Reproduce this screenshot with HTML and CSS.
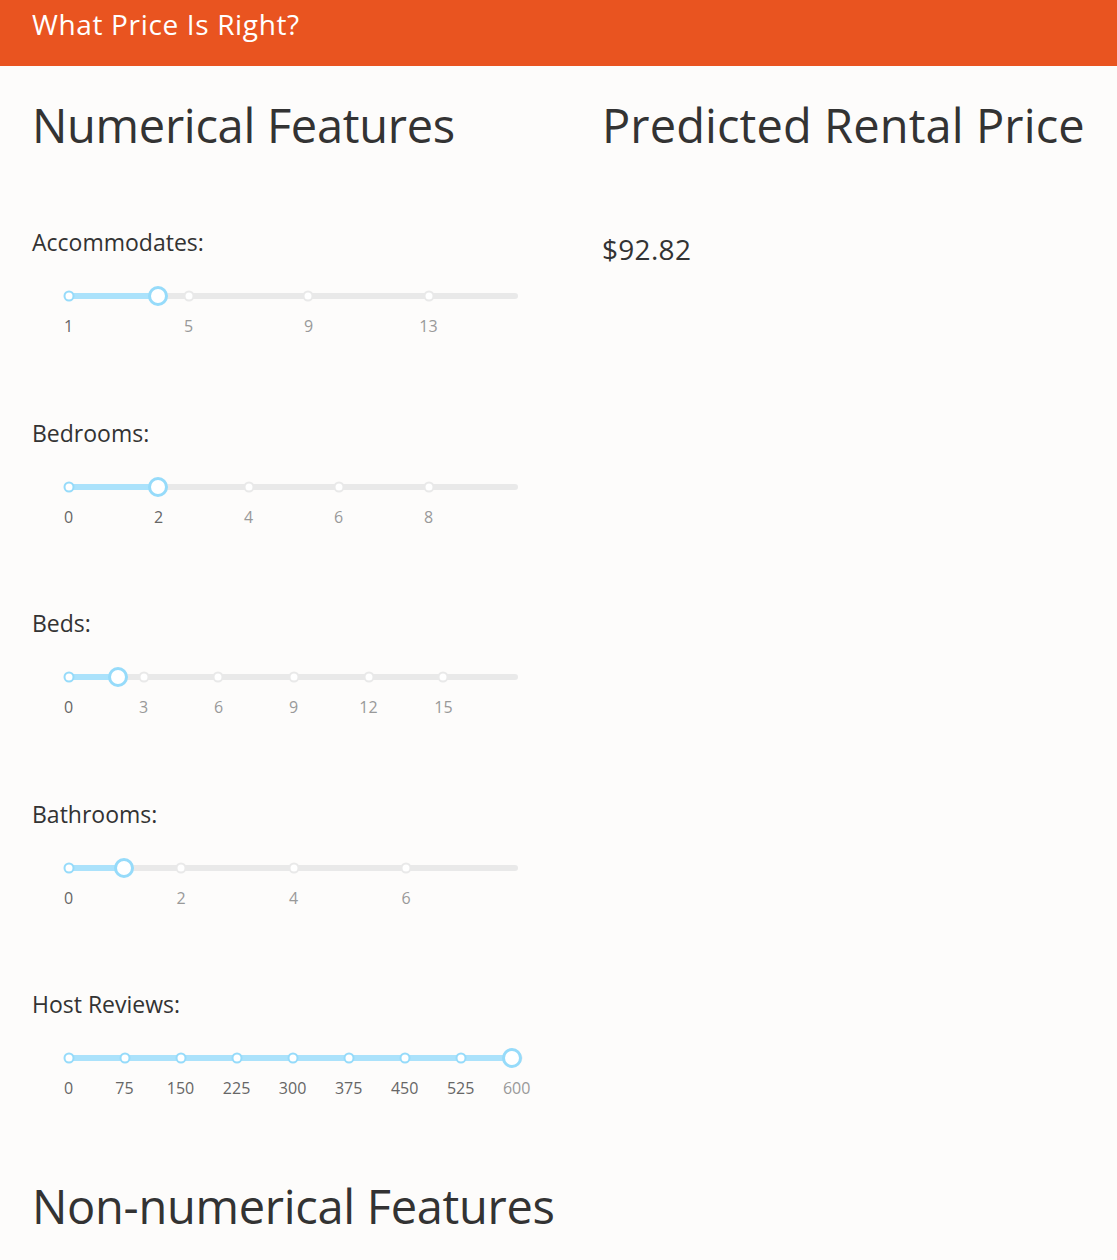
FILE: index.html
```html
<!DOCTYPE html>
<html lang="en">
<head>
<meta charset="utf-8">
<title>What Price Is Right?</title>
<link rel="stylesheet" href="styles.css">
</head>
<body>
<header class="navbar">
  <span class="brand">What Price Is Right?</span>
</header>
<main class="content">
  <section class="col col-left">
    <h1 class="heading">Numerical Features</h1>

    <div class="fields">
    <div class="field">
      <p class="field-label">Accommodates:</p>
      <div class="slider">
        <div class="rail"></div>
        <div class="track" style="width:20%"></div>
        <span class="dot active" style="left:0%"></span>
        <span class="dot" style="left:26.667%"></span>
        <span class="dot" style="left:53.333%"></span>
        <span class="dot" style="left:80%"></span>
        <span class="handle" style="left:20%"></span>
        <div class="marks">
          <span class="mark active" style="left:0%">1</span>
          <span class="mark" style="left:26.667%">5</span>
          <span class="mark" style="left:53.333%">9</span>
          <span class="mark" style="left:80%">13</span>
        </div>
      </div>
    </div>

    <div class="field">
      <p class="field-label">Bedrooms:</p>
      <div class="slider">
        <div class="rail"></div>
        <div class="track" style="width:20%"></div>
        <span class="dot active" style="left:0%"></span>
        <span class="dot active" style="left:20%"></span>
        <span class="dot" style="left:40%"></span>
        <span class="dot" style="left:60%"></span>
        <span class="dot" style="left:80%"></span>
        <span class="handle" style="left:20%"></span>
        <div class="marks">
          <span class="mark active" style="left:0%">0</span>
          <span class="mark active" style="left:20%">2</span>
          <span class="mark" style="left:40%">4</span>
          <span class="mark" style="left:60%">6</span>
          <span class="mark" style="left:80%">8</span>
        </div>
      </div>
    </div>

    <div class="field">
      <p class="field-label">Beds:</p>
      <div class="slider">
        <div class="rail"></div>
        <div class="track" style="width:11.111%"></div>
        <span class="dot active" style="left:0%"></span>
        <span class="dot" style="left:16.667%"></span>
        <span class="dot" style="left:33.333%"></span>
        <span class="dot" style="left:50%"></span>
        <span class="dot" style="left:66.667%"></span>
        <span class="dot" style="left:83.333%"></span>
        <span class="handle" style="left:11.111%"></span>
        <div class="marks">
          <span class="mark active" style="left:0%">0</span>
          <span class="mark" style="left:16.667%">3</span>
          <span class="mark" style="left:33.333%">6</span>
          <span class="mark" style="left:50%">9</span>
          <span class="mark" style="left:66.667%">12</span>
          <span class="mark" style="left:83.333%">15</span>
        </div>
      </div>
    </div>

    <div class="field">
      <p class="field-label">Bathrooms:</p>
      <div class="slider">
        <div class="rail"></div>
        <div class="track" style="width:12.5%"></div>
        <span class="dot active" style="left:0%"></span>
        <span class="dot" style="left:25%"></span>
        <span class="dot" style="left:50%"></span>
        <span class="dot" style="left:75%"></span>
        <span class="handle" style="left:12.5%"></span>
        <div class="marks">
          <span class="mark active" style="left:0%">0</span>
          <span class="mark" style="left:25%">2</span>
          <span class="mark" style="left:50%">4</span>
          <span class="mark" style="left:75%">6</span>
        </div>
      </div>
    </div>

    <div class="field">
      <p class="field-label">Host Reviews:</p>
      <div class="slider">
        <div class="rail"></div>
        <div class="track" style="width:98.66%"></div>
        <span class="dot active" style="left:0%"></span>
        <span class="dot active" style="left:12.45%"></span>
        <span class="dot active" style="left:24.9%"></span>
        <span class="dot active" style="left:37.35%"></span>
        <span class="dot active" style="left:49.8%"></span>
        <span class="dot active" style="left:62.25%"></span>
        <span class="dot active" style="left:74.7%"></span>
        <span class="dot active" style="left:87.15%"></span>
        <span class="dot" style="left:99.6%"></span>
        <span class="handle" style="left:98.66%"></span>
        <div class="marks">
          <span class="mark active" style="left:0%">0</span>
          <span class="mark active" style="left:12.45%">75</span>
          <span class="mark active" style="left:24.9%">150</span>
          <span class="mark active" style="left:37.35%">225</span>
          <span class="mark active" style="left:49.8%">300</span>
          <span class="mark active" style="left:62.25%">375</span>
          <span class="mark active" style="left:74.7%">450</span>
          <span class="mark active" style="left:87.15%">525</span>
          <span class="mark" style="left:99.6%">600</span>
        </div>
      </div>
    </div>
    </div>

    <h1 class="heading heading-bottom">Non-numerical Features</h1>
  </section>

  <section class="col col-right">
    <h1 class="heading heading-right">Predicted Rental Price</h1>
    <p class="price">$92.82</p>
  </section>
</main>
</body>
</html>
```

FILE: styles.css
```css
* { box-sizing: border-box; }

html, body {
  margin: 0;
  padding: 0;
}

body {
  background: #fdfcfb;
  color: #333333;
  font-family: "Open Sans", "Noto Sans", "DejaVu Sans", sans-serif;
  height: 1260px;
  overflow: hidden;
}

.navbar {
  background: #e95420;
  height: 66px;
  padding: 0 32px;
  display: flex;
  align-items: flex-start;
}

.brand {
  color: #ffffff;
  font-size: 28px;
  line-height: 36px;
  margin-top: 6px;
  letter-spacing: 0.65px;
}

.content {
  display: grid;
  grid-template-columns: 570px 1fr;
  padding: 0 32px;
}

.heading {
  font-weight: 400;
  font-size: 47px;
  line-height: 52px;
  margin: 33px 0 0 0;
  letter-spacing: -0.3px;
  color: #333333;
}

.heading-right {
  letter-spacing: 0.1px;
}

.heading-bottom {
  margin-top: 0;
}

.fields {
  display: flex;
  flex-direction: column;
  margin-top: 76px;
}

.field {
  height: 190.5px;
}

.field-label {
  margin: 0;
  font-size: 23px;
  line-height: 30px;
  letter-spacing: 0;
}

.slider {
  position: relative;
  margin: 36px 0 0 36px;
  width: 450px;
  height: 6px;
}

.rail {
  position: absolute;
  left: 0;
  right: 0;
  top: 0;
  height: 6px;
  border-radius: 3px;
  background: #e9e9e9;
}

.track {
  position: absolute;
  left: 0;
  top: 0;
  height: 6px;
  border-radius: 3px;
  background: #abe2fb;
}

.dot {
  position: absolute;
  top: 3px;
  width: 11px;
  height: 11px;
  border: 2.5px solid #e9e9e9;
  border-radius: 50%;
  background: #ffffff;
  transform: translate(-50%, -50%);
  margin-left: 0.5px;
}

.dot.active {
  border-color: #96dbfa;
}

.handle {
  position: absolute;
  top: 3px;
  width: 20px;
  height: 20px;
  border: 3px solid #96dbfa;
  border-radius: 50%;
  background: #ffffff;
  transform: translate(-50%, -50%);
}

.marks {
  position: absolute;
  left: 0;
  right: 0;
  top: 23px;
  height: 20px;
}

.mark {
  position: absolute;
  top: 0;
  font-size: 16px;
  line-height: 20px;
  color: #999999;
  transform: translateX(-50%);
  white-space: nowrap;
  margin-left: 0.5px;
}

.mark.active {
  color: #666666;
}

.price {
  margin: 81px 0 0 0;
  font-size: 28px;
  line-height: 34px;
  letter-spacing: 0.3px;
}
```
